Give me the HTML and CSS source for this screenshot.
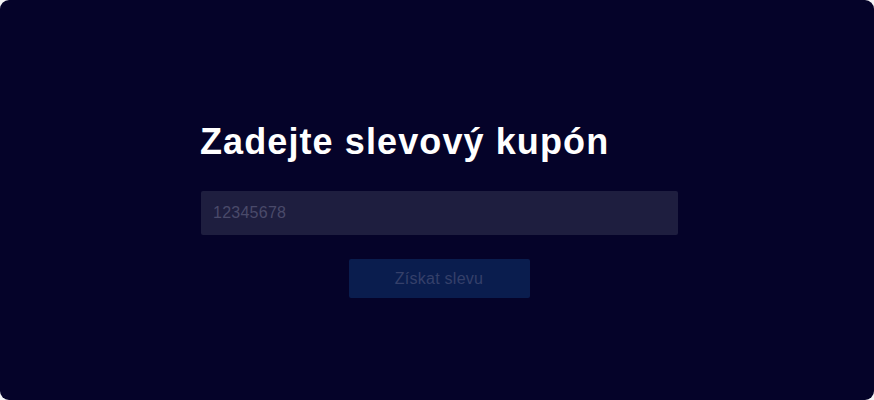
FILE: index.html
```html
<!DOCTYPE html>
<html lang="cs">
<head>
<meta charset="utf-8">
<title>Slevový kupón</title>
<link rel="stylesheet" href="styles.css">
</head>
<body>
<main class="card">
  <form class="coupon">
    <h1 class="title">Zadejte slevový kupón</h1>
    <input class="field" type="text" placeholder="12345678">
    <button class="btn" type="button">Získat slevu</button>
  </form>
</main>
</body>
</html>
```
FILE: styles.css
```css
html, body {
  margin: 0;
  padding: 0;
  background: #f4f4f6;
}
body {
  font-family: "Liberation Sans", Arial, sans-serif;
}
.card {
  box-sizing: border-box;
  width: 874px;
  height: 400px;
  background: #050329;
  border-radius: 9px;
  display: flex;
  justify-content: center;
  padding-top: 120px;
}
.coupon {
  width: 478px;
  margin-left: 4px;
  display: flex;
  flex-direction: column;
  align-items: center;
}
.title {
  align-self: flex-start;
  margin: 0;
  color: #ffffff;
  font-size: 36px;
  font-weight: 700;
  line-height: 44px;
  letter-spacing: 1.1px;
}
.field {
  box-sizing: border-box;
  align-self: stretch;
  margin-top: 27px;
  margin-left: 1px;
  height: 44px;
  border: 0;
  border-radius: 2px;
  background: #1e1e3f;
  padding: 0 12px;
  font-family: "Liberation Sans", Arial, sans-serif;
  font-size: 16px;
  letter-spacing: 0.25px;
  color: #c8c8d8;
  outline: none;
}
.field::placeholder {
  color: #4a4a6a;
}
.btn {
  box-sizing: border-box;
  margin-top: 24px;
  width: 181px;
  height: 39px;
  border: 0;
  border-radius: 2px;
  background: #0a1d4e;
  color: #35406a;
  font-family: "Liberation Sans", Arial, sans-serif;
  font-size: 16px;
  letter-spacing: 0.25px;
}
```
